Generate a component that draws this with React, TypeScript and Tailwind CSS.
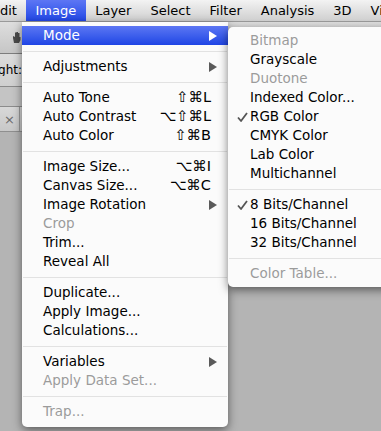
import React from 'react';

type Row = {
    label?: string
    shortcut?: string
    arrow?: boolean
    disabled?: boolean
    checked?: boolean
    active?: boolean
    sep?: boolean
};

const mainRows: Row[] = [
    { label: 'Mode', arrow: true, active: true },
    { sep: true },
    { label: 'Adjustments', arrow: true },
    { sep: true },
    { label: 'Auto Tone', shortcut: '⇧⌘L' },
    { label: 'Auto Contrast', shortcut: '⌥⇧⌘L' },
    { label: 'Auto Color', shortcut: '⇧⌘B' },
    { sep: true },
    { label: 'Image Size...', shortcut: '⌥⌘I' },
    { label: 'Canvas Size...', shortcut: '⌥⌘C' },
    { label: 'Image Rotation', arrow: true },
    { label: 'Crop', disabled: true },
    { label: 'Trim...' },
    { label: 'Reveal All' },
    { sep: true },
    { label: 'Duplicate...' },
    { label: 'Apply Image...' },
    { label: 'Calculations...' },
    { sep: true },
    { label: 'Variables', arrow: true },
    { label: 'Apply Data Set...', disabled: true },
    { sep: true },
    { label: 'Trap...', disabled: true },
];

const modeRows: Row[] = [
    { label: 'Bitmap', disabled: true },
    { label: 'Grayscale' },
    { label: 'Duotone', disabled: true },
    { label: 'Indexed Color...' },
    { label: 'RGB Color', checked: true },
    { label: 'CMYK Color' },
    { label: 'Lab Color' },
    { label: 'Multichannel' },
    { sep: true },
    { label: '8 Bits/Channel', checked: true },
    { label: '16 Bits/Channel' },
    { label: '32 Bits/Channel' },
    { sep: true },
    { label: 'Color Table...', disabled: true },
];

const Arrow = ({ white }: { white?: boolean }) => (
    <svg width="8" height="10" viewBox="0 0 8 10">
        <path d="M0 0 L8 5 L0 10 Z" fill={white ? '#ffffff' : '#5a5a5a'} />
    </svg>
);

const Check = () => (
    <svg width="11" height="10" viewBox="0 0 11 10">
        <path d="M1 5.5 L4 9 L10 1" fill="none" stroke="#555" strokeWidth="1.8" strokeLinejoin="round" />
    </svg>
);

const Separator = () => (
    <div className="h-[12px] flex items-center px-[1px]">
        <div className="h-px w-full bg-[#e2e2e2]" />
    </div>
);

const MainItem = ({ row }: { row: Row }) => {
    if (row.sep) return <Separator />;
    return (
        <div
            className={
                'flex items-center h-[19px] pl-[21px] pr-[11px] ' +
                (row.active ? 'bg-gradient-to-b from-[#5c76f3] to-[#1f44e5] text-white' : row.disabled ? 'text-[#9b9b9b]' : 'text-black')
            }
        >
            <span className="flex-1 whitespace-nowrap">{row.label}</span>
            {row.shortcut && <span className="mr-[6px] whitespace-nowrap text-[14.5px]">{row.shortcut}</span>}
            {row.arrow && <Arrow white={row.active} />}
        </div>
    );
};

const SubItem = ({ row }: { row: Row }) => {
    if (row.sep) return <Separator />;
    return (
        <div className={'flex items-center h-[19px] ' + (row.disabled ? 'text-[#9b9b9b]' : 'text-black')}>
            <span className="w-[22px] flex justify-end pr-[2px]">{row.checked && <Check />}</span>
            <span className="whitespace-nowrap">{row.label}</span>
        </div>
    );
};

const HandIcon = () => (
    <svg width="9" height="13" viewBox="0 0 9 13">
        <path d="M2 12 L1 7 L1 5 L3 6 L3 1.5 L4.5 1.5 L4.5 5 L4.5 1 L6 1 L6 5 L6 2 L7.5 2 L7.5 6 L8.5 6 L8.5 9 L7 12 Z" fill="#4a4a4a" />
    </svg>
);

export default function App() {
    const menuBar = ['Layer', 'Select', 'Filter', 'Analysis', '3D', 'Vi'];

    return (
        <div
            className="relative w-[381px] h-[431px] overflow-hidden bg-[#b0b0b0] text-[13.5px] leading-none"
            style={{ fontFamily: '"DejaVu Sans", "Liberation Sans", sans-serif' }}
        >
            {/* menu bar */}
            <div className="flex items-center h-[22px] bg-gradient-to-b from-[#f3f3f3] to-[#cfcfcf] border-b border-[#9a9a9a] text-[13px] text-black whitespace-nowrap">
                <span className="pr-[9px]">dit</span>
                <span className="h-full flex items-center px-[9.5px] bg-gradient-to-b from-[#5d76f4] to-[#2246e6] text-white">Image</span>
                {menuBar.map((m) => (
                    <span key={m} className="px-[9.5px]">{m}</span>
                ))}
            </div>

            {/* app chrome behind the menus */}
            <div className="flex flex-col">
                <div className="h-[32px] bg-gradient-to-b from-[#dedede] to-[#c6c6c6] border-b border-[#7d7d7d] flex items-center pl-[12px]">
                    <HandIcon />
                </div>
                <div className="h-[33px] bg-gradient-to-b from-[#dcdcdc] to-[#cfcfcf] border-b border-[#8a8a8a] flex items-center">
                    <div className="w-[22px] overflow-hidden flex justify-end text-[12px] text-black">
                        <span className="whitespace-nowrap">Height:</span>
                    </div>
                </div>
                <div className="h-[20px] bg-[#c4c4c4] border-b border-[#8c8c8c]" />
                <div className="h-[25px] bg-gradient-to-b from-[#d8d8d8] to-[#c8c8c8] border-b border-[#8f8f8f] flex items-center">
                    <span className="w-[19px] text-center text-[13px] text-[#6a6a6a]">×</span>
                    <div className="w-px h-full bg-[#9a9a9a]" />
                </div>
                <div className="h-[300px] bg-[#b4b4b4]" />
            </div>

            {/* Image menu */}
            <div className="absolute left-[22px] top-[22px] w-[206px] pt-[4px] pb-[6px] bg-[#fbfbfb] rounded-b-[5px] shadow-[0_3px_10px_rgba(0,0,0,0.5)]">
                {mainRows.map((r, i) => (
                    <MainItem key={i} row={r} />
                ))}
            </div>

            {/* Mode submenu */}
            <div className="absolute left-[228px] top-[27px] w-[170px] pt-[4px] pb-[4px] bg-[#fbfbfb] rounded-[5px] shadow-[0_3px_10px_rgba(0,0,0,0.5)]">
                {modeRows.map((r, i) => (
                    <SubItem key={i} row={r} />
                ))}
            </div>
        </div>
    );
}
